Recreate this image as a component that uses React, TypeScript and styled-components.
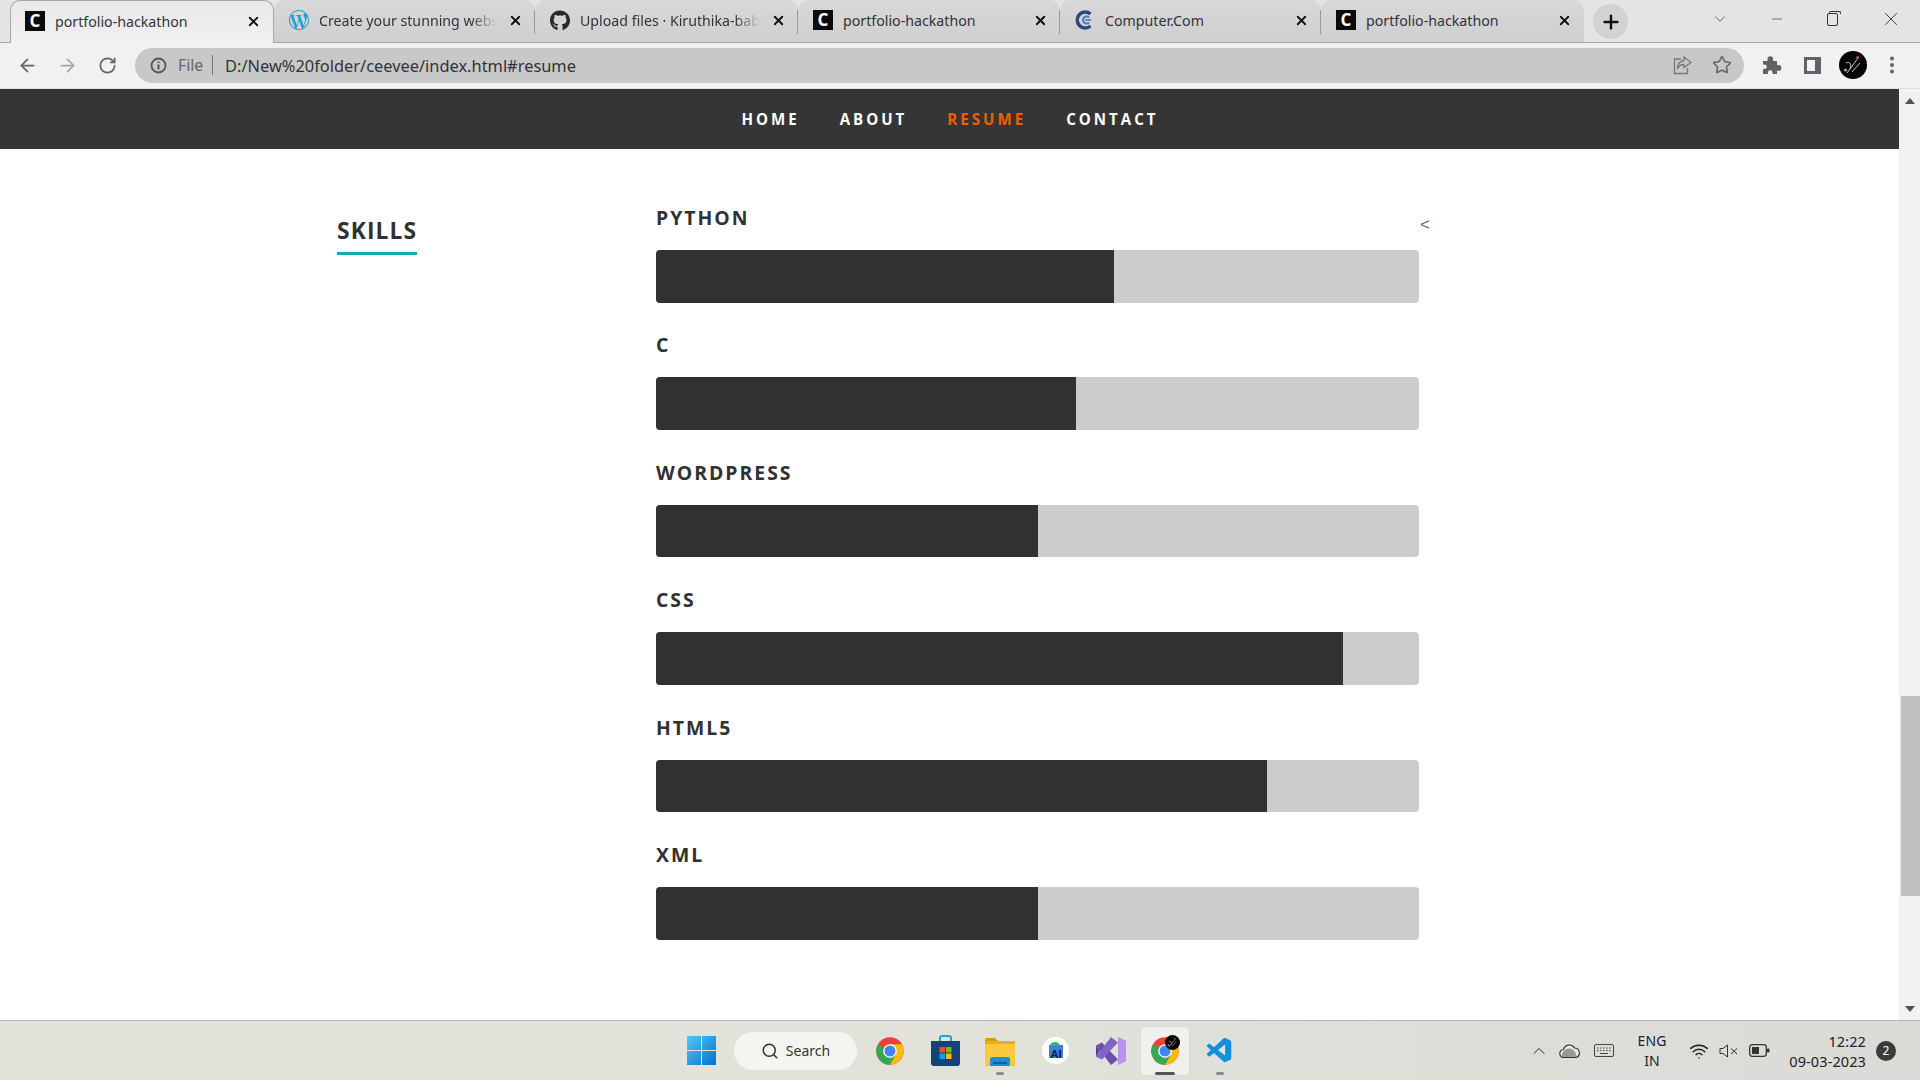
import React from "react";
import styled, { createGlobalStyle, css } from "styled-components";
import { ArrowLeft, ArrowRight, RotateCw, Star, X, Plus, ChevronDown, Search, Minus, ChevronUp, Wifi } from "lucide-react";
import { FaGithub } from "react-icons/fa";
import { SiWordpress } from "react-icons/si";
import { VscVscode } from "react-icons/vsc";

const Global = createGlobalStyle`
  html, body { margin: 0; padding: 0; height: 100%; overflow: hidden; background: #fff; }
  * { box-sizing: border-box; }
`;

const Screen = styled.div`
  width: 1920px; height: 1080px; display: flex; flex-direction: column; overflow: hidden;
  font-family: "Noto Sans", "Open Sans", sans-serif; background: #fff;
`;

/* ---------- tab strip ---------- */
const TabStrip = styled.div`
  height: 43px; flex: none; display: flex; align-items: flex-start; padding-left: 10px;
  background: #e4e4e4; border-bottom: 1px solid #a8a8a8;
`;
const Tab = styled.div<{ $w: number; $active?: boolean; $sep?: boolean }>`
  width: ${(p) => p.$w}px; height: 42px; flex: none; display: flex; align-items: center; gap: 10px;
  padding: 0 12px 2px 15px; position: relative; border-radius: 10px 10px 0 0; color: #30343a;
  background: linear-gradient(#d8d8d8, #cfcfcf);
  ${(p) => p.$active && css`
    background: linear-gradient(#e9e9e9, #f0f0f0);
    border: 1px solid #a8a8a8; border-bottom: none; height: 43px; z-index: 2; padding-left: 14px;
  `}
  ${(p) => p.$sep && css`
    &::after { content: ""; position: absolute; right: 0; top: 10px; bottom: 8px; width: 1px; background: #9a9a9a; }
  `}
`;
const TabIcon = styled.span`
  width: 20px; height: 20px; flex: none; display: flex; align-items: center; justify-content: center;
`;
const CeeveeIcon = styled(TabIcon)`
  background: #0b0b0b; color: #fff; font: 700 17px/20px "Open Sans", sans-serif;
`;
const TabTitle = styled.span<{ $fade?: boolean }>`
  flex: 1; min-width: 0; overflow: hidden; white-space: nowrap; font-size: 14.2px;
  ${(p) => p.$fade && css`
    mask-image: linear-gradient(to left, transparent, #000 26px);
  `}
`;
const TabClose = styled.span`
  width: 16px; height: 16px; flex: none; display: flex; align-items: center; justify-content: center; color: #111;
`;
const NewTab = styled.div`
  width: 35px; height: 35px; margin: 4px 0 0 9px; flex: none; border-radius: 50%; background: #d2d2d2;
  display: flex; align-items: center; justify-content: center; color: #111;
`;
const WindowControls = styled.div`
  margin-left: auto; height: 38px; display: flex; align-items: center; gap: 35px; color: #333; padding-right: 18px;
`;
const WinBtn = styled.span`
  width: 22px; display: flex; align-items: center; justify-content: center;
`;
const RestoreIcon = styled.span`
  width: 11px; height: 13px; margin-left: -3px; border: 1px solid #333; border-radius: 2px; position: relative;
  &::before { content: ""; position: absolute; left: 1px; top: -3px; width: 10px; height: 2px; border: 1px solid #333; border-bottom: none; border-radius: 2px 2px 0 0; }
`;

/* ---------- toolbar ---------- */
const Toolbar = styled.div`
  height: 46px; flex: none; display: flex; align-items: center; padding: 0 0 1px 7px;
  background: #f1f1f1; border-bottom: 1px solid #dedede;
`;
const NavButton = styled.span<{ $dim?: boolean }>`
  width: 40px; flex: none; display: flex; justify-content: center; color: ${(p) => (p.$dim ? "#a6a6a6" : "#666")};
`;
const Omnibox = styled.div`
  width: 1609px; height: 35px; flex: none; margin-left: 8px; border-radius: 18px; background: #c8c8c8;
  display: flex; align-items: center; padding: 0 12px 0 15px; color: #555;
`;
const Scheme = styled.span`
  font-size: 15.7px; color: #666; margin-left: 11px; padding-right: 9px; border-right: 1px solid #777; line-height: 20px;
`;
const Url = styled.span`
  font-size: 16.4px; color: #2f3338; margin: 1px 0 0 12px; letter-spacing: 0;
`;
const OmniActions = styled.div`
  margin-left: auto; display: flex; align-items: center; gap: 20px; color: #666;
`;
const ToolIcons = styled.div`
  display: flex; align-items: center; color: #5f6368;
`;
const ToolSlot = styled.span<{ $w: number }>`
  width: ${(p) => p.$w}px; display: flex; justify-content: center; align-items: center;
`;
const PanelIcon = styled.span`
  width: 17px; height: 17px; border: 3px solid #5f6368; border-right-width: 6px; background: #f1f1f1;
`;

/* ---------- page ---------- */
const Viewport = styled.div`
  flex: 1; min-height: 0; display: flex;
`;
const Page = styled.main`
  flex: 1; min-width: 0; background: #fff; display: flex; flex-direction: column;
`;
const SiteNav = styled.nav`
  height: 60px; flex: none; background: #353535; display: flex; justify-content: center; align-items: center; gap: 40px;
  padding-left: 1px;
`;
const NavLink = styled.a<{ $current?: boolean }>`
  font: 700 15.1px/20px "Open Sans", sans-serif; letter-spacing: 3px; text-transform: uppercase;
  color: ${(p) => (p.$current ? "#f06000" : "#fff")};
`;
const SkillsSection = styled.section`
  display: flex; padding: 64.5px 0 0 337px;
`;
const Sidebar = styled.div`
  width: 319px; flex: none;
`;
const SectionTitle = styled.h1`
  display: inline-block; margin: 0; padding: 0 0 4px; font: 700 22.8px/34px "Open Sans", sans-serif; letter-spacing: 1.1px;
  color: #313131; border-bottom: 3px solid #11abb0; text-transform: uppercase;
`;
const SkillList = styled.div`
  width: 763px; margin-top: -14.5px;
`;
const SkillItem = styled.div`
  height: 127.4px;
`;
const SkillLabel = styled.div`
  height: 51px; padding-top: 5px; display: flex; justify-content: space-between; align-items: flex-start;
  font: 700 19.4px/27px "Open Sans", sans-serif; letter-spacing: 2px; color: #313131;
`;
const StrayMark = styled.span`
  margin: 13px -11px 0 0; font: 400 17px/16px "Liberation Sans", sans-serif; letter-spacing: 0; color: #667;
`;
const Bar = styled.div`
  height: 52.7px; background: #ccc; border-radius: 4px; overflow: hidden;
`;
const BarFill = styled.div<{ $pct: number }>`
  height: 100%; width: ${(p) => p.$pct}%; background: #313131;
`;
const Scrollbar = styled.aside`
  width: 21px; flex: none; background: #f1f1f1; display: flex; flex-direction: column; align-items: center; position: relative;
`;
const ArrowUp = styled.span`
  margin-top: 9px; width: 0; height: 0; border: 5px solid transparent; border-top: none; border-bottom: 6px solid #505050;
`;
const ScrollThumb = styled.span`
  position: absolute; top: 607px; left: 2px; right: 0; height: 200px; background: #c1c1c1;
`;
const ArrowDown = styled.span`
  margin-top: auto; margin-bottom: 8px; width: 0; height: 0; border: 5px solid transparent; border-bottom: none; border-top: 6px solid #505050;
`;

/* ---------- taskbar ---------- */
const Taskbar = styled.footer`
  height: 60px; flex: none; display: flex; align-items: center; padding-left: 687px; position: relative;
  background: linear-gradient(90deg, #e3e3dc, #e2e2db 50%, #dadad7); border-top: 1px solid #b5b5ad; color: #222;
`;
const StartSlot = styled.span`
  width: 47px; flex: none; display: flex;
`;
const SearchPill = styled.div`
  width: 123px; height: 38px; flex: none; border-radius: 19px; background: #f4f4f1; display: flex; align-items: center;
  justify-content: center; gap: 7px; font-size: 14px; color: #333;
`;
const TaskIcons = styled.div`
  display: flex; margin-left: 5px; height: 100%; align-items: center;
`;
const TaskSlot = styled.span<{ $w: number; $active?: boolean; $mark?: "short" | "long" }>`
  width: ${(p) => p.$w}px; height: 48px; flex: none; display: flex; align-items: center; justify-content: center; position: relative;
  border-radius: 4px;
  ${(p) => p.$active && css`background: #f0f0ec; box-shadow: 0 0 1px #bbb; margin: 0 3px;`}
  ${(p) => p.$mark && css`
    &::after {
      content: ""; position: absolute; bottom: 0; left: 50%; height: 3px; border-radius: 2px;
      width: ${p.$mark === "long" ? 20 : 8}px; margin-left: ${p.$mark === "long" ? -10 : -4}px;
      background: ${p.$mark === "long" ? "#555" : "#8a8a8a"};
    }
  `}
`;
const AvatarBadge = styled.span`
  position: absolute; top: 8px; right: 9px; width: 15px; height: 15px; display: flex;
`;
const Tray = styled.div`
  margin-left: auto; height: 100%; display: flex; align-items: center; color: #222; padding-right: 24px;
`;
const TraySlot = styled.span<{ $w: number }>`
  width: ${(p) => p.$w}px; flex: none; display: flex; justify-content: center; align-items: center;
`;
const TrayText = styled.span<{ $w: number; $right?: boolean }>`
  width: ${(p) => p.$w}px; flex: none; font-size: ${(p) => (p.$right ? 14.5 : 14)}px; line-height: 20px;
  text-align: ${(p) => (p.$right ? "right" : "center")}; letter-spacing: 0.1px;
`;
const Badge = styled.span`
  width: 20px; height: 20px; margin-left: 10px; flex: none; border-radius: 50%; background: #3a3a3a; color: #fff; font-size: 12px;
  display: flex; align-items: center; justify-content: center;
`;

/* ---------- drawn icons ---------- */
const ChromeLogo = ({ s = 30 }: { s?: number }) => (
  <svg width={s} height={s} viewBox="0 0 48 48">
    <circle cx="24" cy="24" r="22" fill="#ea4335" />
    <path d="M24 24L5 35A22 22 0 0 0 24 46L33.500 29.500z" fill="#34a853" />
    <path d="M5 13A22 22 0 0 0 5 35L14.500 29.500 24 24z" fill="#34a853" />
    <path d="M24 13H43A22 22 0 0 1 24 46L33.500 29.500z" fill="#fbbc05" />
    <circle cx="24" cy="24" r="11" fill="#fff" />
    <circle cx="24" cy="24" r="8.800" fill="#4285f4" />
  </svg>
);
const Avatar = ({ s = 28 }: { s?: number }) => (
  <svg width={s} height={s} viewBox="0 0 28 28">
    <circle cx="14" cy="14" r="14" fill="#050505" />
    <path d="M8 22 L19 7 M13 21 L21 12 M7 12 C11 10 13 14 11 18" stroke="#ddd" strokeWidth="0.9" fill="none" />
    <path d="M17 6.500l1.600 1.400 1.600-1.400a1 1 0 0 0-1.600-1 1 1 0 0 0-1.600 1z" fill="#ef3d9b" />
    <circle cx="6.500" cy="19" r="1.600" fill="#b58ae8" />
  </svg>
);

const skills = [
  { name: "PYTHON", pct: 60 },
  { name: "C", pct: 55 },
  { name: "WORDPRESS", pct: 50 },
  { name: "CSS", pct: 90 },
  { name: "HTML5", pct: 80.1 },
  { name: "XML", pct: 50 },
];

const Ceevee = () => <CeeveeIcon>C</CeeveeIcon>;
const tabs: { title: string; w: number; icon: React.ReactNode; fade?: boolean }[] = [
  { title: "portfolio-hackathon", w: 264, icon: <Ceevee /> },
  { title: "Create your stunning website", w: 261, icon: <TabIcon><SiWordpress size={20} color="#1f9fd8" /></TabIcon>, fade: true },
  { title: "Upload files · Kiruthika-babu/portfolio", w: 263, icon: <TabIcon><FaGithub size={21} color="#24292f" /></TabIcon>, fade: true },
  { title: "portfolio-hackathon", w: 262, icon: <Ceevee /> },
  {
    title: "Computer.Com",
    w: 261,
    icon: (
      <TabIcon>
        <svg width="20" height="20" viewBox="0 0 20 20" fill="none">
          <path d="M15.500 4A8 8 0 1 0 15.500 16" stroke="#26497f" strokeWidth="3.400" />
          <path d="M14 7.500A3.500 3.500 0 1 0 14 12.500" stroke="#4a7ac0" strokeWidth="2" />
          <path d="M10 10h6" stroke="#4a7ac0" strokeWidth="1.600" />
        </svg>
      </TabIcon>
    ),
  },
  { title: "portfolio-hackathon", w: 263, icon: <Ceevee /> },
];

export default function App() {
  return (
    <Screen>
      <Global />
      <TabStrip>
        {tabs.map((t, i) => (
          <Tab key={i} $w={t.w} $active={i === 0} $sep={i > 0 && i < 5}>
            {t.icon}
            <TabTitle $fade={t.fade}>{t.title}</TabTitle>
            <TabClose><X size={15} strokeWidth={3} /></TabClose>
          </Tab>
        ))}
        <NewTab><Plus size={22} strokeWidth={2.6} /></NewTab>
        <WindowControls>
          <WinBtn><ChevronDown size={18} strokeWidth={1} /></WinBtn>
          <WinBtn><Minus size={16} strokeWidth={1} /></WinBtn>
          <WinBtn><RestoreIcon /></WinBtn>
          <WinBtn><X size={22} strokeWidth={1} /></WinBtn>
        </WindowControls>
      </TabStrip>
      <Toolbar>
        <NavButton><ArrowLeft size={21} strokeWidth={2} /></NavButton>
        <NavButton $dim><ArrowRight size={21} strokeWidth={2} /></NavButton>
        <NavButton><RotateCw size={19} strokeWidth={2.2} /></NavButton>
        <Omnibox>
          <svg width="17" height="17" viewBox="0 0 17 17">
            <circle cx="8.5" cy="8.5" r="7" stroke="#555" strokeWidth="1.8" fill="none" />
            <path d="M8.5 7.5v5M8.5 4.5v1.6" stroke="#555" strokeWidth="2" />
          </svg>
          <Scheme>File</Scheme>
          <Url>D:/New%20folder/ceevee/index.html#resume</Url>
          <OmniActions>
            <svg width="19" height="20" viewBox="0 0 19 20" fill="none" stroke="#777" strokeWidth="1.3">
              <path d="M8 4H1.5v14.500h13V13" />
              <path d="M11 2l7 5.500-7 5V9.500C8 9.500 5.500 11 4.500 14c0-5 2.500-8 6.500-8.500z" />
            </svg>
            <Star size={20} strokeWidth={1.9} />
          </OmniActions>
        </Omnibox>
        <ToolIcons>
          <ToolSlot $w={56}>
            <svg width="20" height="20" viewBox="0 0 20 20" fill="#5f6368">
              <path d="M1 6h4.500V4a2.800 2.800 0 0 1 5.600 0v2H15v4h1.500a2.900 2.900 0 0 1 0 5.800H15V19h-4.500v-1.500a2.300 2.300 0 0 0-4.600 0V19H1v-5h1.500a2.300 2.300 0 0 0 0-4.600H1z" />
            </svg>
          </ToolSlot>
          <ToolSlot $w={25}><PanelIcon /></ToolSlot>
          <ToolSlot $w={56}><Avatar /></ToolSlot>
          <ToolSlot $w={22}>
            <svg width="4" height="18" viewBox="0 0 4 18"><circle cx="2" cy="2.5" r="2" fill="#5f6368" /><circle cx="2" cy="9" r="2" fill="#5f6368" /><circle cx="2" cy="15.5" r="2" fill="#5f6368" /></svg>
          </ToolSlot>
        </ToolIcons>
      </Toolbar>
      <Viewport>
        <Page>
          <SiteNav>
            <NavLink>Home</NavLink>
            <NavLink>About</NavLink>
            <NavLink $current>Resume</NavLink>
            <NavLink>Contact</NavLink>
          </SiteNav>
          <SkillsSection>
            <Sidebar><SectionTitle>Skills</SectionTitle></Sidebar>
            <SkillList>
              {skills.map((s, i) => (
                <SkillItem key={s.name}>
                  <SkillLabel>
                    {s.name}
                    {i === 0 && <StrayMark>&lt;</StrayMark>}
                  </SkillLabel>
                  <Bar><BarFill $pct={s.pct} /></Bar>
                </SkillItem>
              ))}
            </SkillList>
          </SkillsSection>
        </Page>
        <Scrollbar>
          <ArrowUp />
          <ScrollThumb />
          <ArrowDown />
        </Scrollbar>
      </Viewport>
      <Taskbar>
        <StartSlot>
          <svg width="29" height="29" viewBox="0 0 29 29">
            <defs>
              <linearGradient id="win" x1="0" y1="0" x2="1" y2="1">
                <stop offset="0" stopColor="#52c8f8" />
                <stop offset="1" stopColor="#0571cc" />
              </linearGradient>
            </defs>
            <path d="M0 0h14v14H0zM15 0h14v14H15zM0 15h14v14H0zM15 15h14v14H15z" fill="url(#win)" />
          </svg>
        </StartSlot>
        <SearchPill><Search size={18} strokeWidth={2} />Search</SearchPill>
        <TaskIcons>
          <TaskSlot $w={56}><ChromeLogo /></TaskSlot>
          <TaskSlot $w={54}>
            <svg width="29" height="32" viewBox="0 0 29 32">
              <path d="M9 6V3a2 2 0 0 1 2-2h7a2 2 0 0 1 2 2v3" stroke="#1aa5e8" strokeWidth="2" fill="none" />
              <path d="M0 6h29v22a3 3 0 0 1-3 3H3a3 3 0 0 1-3-3z" fill="#17417a" />
              <path d="M8.5 12h5.500v5.500H8.500z" fill="#f25022" />
              <path d="M15 12h5.500v5.500H15z" fill="#7fba00" />
              <path d="M8.5 18.5h5.500V24H8.500z" fill="#00a4ef" />
              <path d="M15 18.5h5.500V24H15z" fill="#ffb900" />
            </svg>
          </TaskSlot>
          <TaskSlot $w={56} $mark="short">
            <svg width="30" height="30" viewBox="0 0 30 30">
              <path d="M0 4a2 2 0 0 1 2-2h8l3 3h-13z" fill="#d69c08" />
              <path d="M0 5h30v25H0z" fill="#fbc93d" />
              <path d="M0 5h30v3H0z" fill="#e9ad1a" />
              <path d="M5 30v-7a2 2 0 0 1 2-2h16a2 2 0 0 1 2 2v7z" fill="#1d8fd8" />
              <path d="M8 26h14v2H8z" fill="#0a5fa8" />
            </svg>
          </TaskSlot>
          <TaskSlot $w={55}>
            <svg width="27" height="27" viewBox="0 0 27 27">
              <circle cx="13.5" cy="13.5" r="13.5" fill="#fff" />
              <path d="M7 8h14v13H7z" fill="#3f7fe0" />
              <path d="M8 9a5 4 0 0 1 10 0z" fill="#2fb56f" />
              <text x="14" y="20.500" textAnchor="middle" fontSize="11" fontWeight="700" fill="#0b1a3a" fontFamily="Liberation Sans">AI</text>
            </svg>
          </TaskSlot>
          <TaskSlot $w={55}>
            <svg width="30" height="30" viewBox="0 0 30 32" preserveAspectRatio="none">
              <path d="M0 10l6-3 16 18-7 6z" fill="#6b4fae" />
              <path d="M0 22l6 3L22 7l-7-6z" fill="#8662c8" />
              <path d="M22 1l8 4v22l-8 4z" fill="#b794ea" />
              <path d="M0 10l4 6-4 6z" fill="#5a3f9c" />
            </svg>
          </TaskSlot>
          <TaskSlot $w={48} $active $mark="long">
            <ChromeLogo />
            <AvatarBadge><Avatar s={15} /></AvatarBadge>
          </TaskSlot>
          <TaskSlot $w={56} $mark="short"><VscVscode size={30} color="#0f8fdc" /></TaskSlot>
        </TaskIcons>
        <Tray>
          <TraySlot $w={20}><ChevronUp size={26} strokeWidth={1.2} /></TraySlot>
          <TraySlot $w={40}>
            <svg width="21" height="14" viewBox="0 0 21 14">
              <path d="M5 13.500a4 4 0 0 1-.5-8 6 6 0 0 1 11-1.500 4.800 4.800 0 0 1 1 9.500z" fill="#eee" stroke="#333" strokeWidth="1.200" />
              <path d="M3 12.500a6 6 0 0 1 14-2l1 2.500H4z" fill="#999" />
            </svg>
          </TraySlot>
          <TraySlot $w={30}>
            <svg width="20" height="13" viewBox="0 0 20 13" fill="none" stroke="#444">
              <rect x=".5" y=".5" width="19" height="12" rx="1.500" />
              <path d="M3 4h14M3 6.500h14" strokeDasharray="1.500 1.500" />
              <path d="M6 9.500h8" />
            </svg>
          </TraySlot>
          <TrayText $w={66}>ENG<br />IN</TrayText>
          <TraySlot $w={28}><Wifi size={20} strokeWidth={1.8} /></TraySlot>
          <TraySlot $w={32}>
            <svg width="20" height="14" viewBox="0 0 20 14" fill="none" stroke="#333" strokeWidth="1">
              <path d="M1 4.500h3L8.500 1v12L4 9.500H1z" />
              <path d="M12 4.500l6 5.500M18 4.500l-6 5.500" />
            </svg>
          </TraySlot>
          <TraySlot $w={28}>
            <svg width="21" height="13" viewBox="0 0 21 13">
              <rect x=".7" y=".7" width="16.600" height="11.600" rx="2.500" fill="none" stroke="#333" strokeWidth="1.300" />
              <rect x="3" y="3" width="7" height="7" fill="#333" />
              <rect x="18" y="4.500" width="2.500" height="4" rx="1" fill="#333" />
            </svg>
          </TraySlot>
          <TrayText $w={93} $right>12:22<br />09-03-2023</TrayText>
          <Badge>2</Badge>
        </Tray>
      </Taskbar>
    </Screen>
  );
}
